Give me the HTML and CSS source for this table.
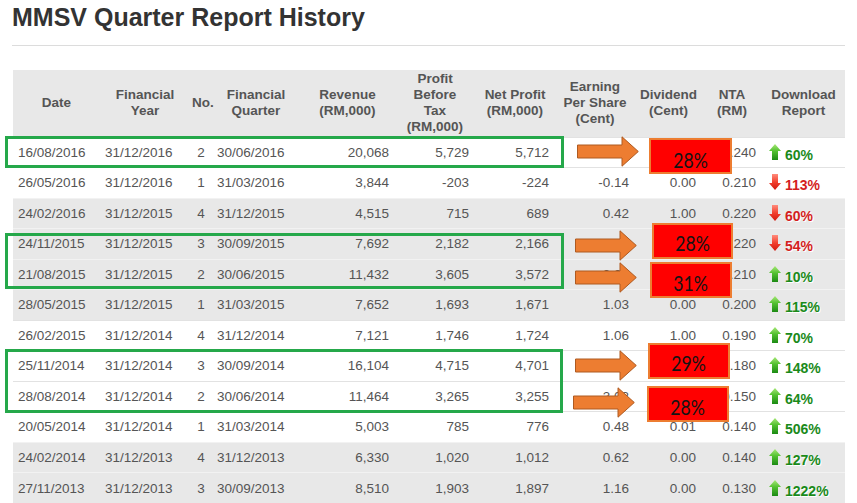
FILE: index.html
```html
<!DOCTYPE html>
<html>
<head>
<meta charset="utf-8">
<link rel="stylesheet" href="styles.css">
</head>
<body>
<div class="page">
  <h1 class="title">MMSV Quarter Report History</h1>
  <div class="rule"></div>
  <table class="report">
    <colgroup>
      <col class="c-date"><col class="c-fy"><col class="c-no"><col class="c-fq"><col class="c-rev"><col class="c-pbt"><col class="c-np"><col class="c-eps"><col class="c-div"><col class="c-nta"><col class="c-dl">
    </colgroup>
    <thead>
      <tr>
        <th>Date</th><th>Financial<br>Year</th><th>No.</th><th>Financial<br>Quarter</th><th>Revenue<br>(RM,000)</th><th>Profit<br>Before<br>Tax<br>(RM,000)</th><th>Net Profit<br>(RM,000)</th><th>Earning<br>Per Share<br>(Cent)</th><th>Dividend<br>(Cent)</th><th>NTA<br>(RM)</th><th>Download<br>Report</th>
      </tr>
    </thead>
    <tbody>
      <tr class="w"><td class="l">16/08/2016</td><td class="l">31/12/2016</td><td class="c">2</td><td class="l">30/06/2016</td><td>20,068</td><td>5,729</td><td>5,712</td><td>5.34</td><td>1.50</td><td>0.240</td><td class="dl"><span class="ico"><svg viewBox="0 0 12 16"><use href="#upArrow"/></svg></span><span class="pct g">60%</span></td></tr>
      <tr class="w"><td class="l">26/05/2016</td><td class="l">31/12/2016</td><td class="c">1</td><td class="l">31/03/2016</td><td>3,844</td><td>-203</td><td>-224</td><td>-0.14</td><td>0.00</td><td>0.210</td><td class="dl"><span class="ico"><svg viewBox="0 0 12 16"><use href="#downArrow"/></svg></span><span class="pct r">113%</span></td></tr>
      <tr class="g"><td class="l">24/02/2016</td><td class="l">31/12/2015</td><td class="c">4</td><td class="l">31/12/2015</td><td>4,515</td><td>715</td><td>689</td><td>0.42</td><td>1.00</td><td>0.220</td><td class="dl"><span class="ico"><svg viewBox="0 0 12 16"><use href="#downArrow"/></svg></span><span class="pct r">60%</span></td></tr>
      <tr class="g"><td class="l">24/11/2015</td><td class="l">31/12/2015</td><td class="c">3</td><td class="l">30/09/2015</td><td>7,692</td><td>2,182</td><td>2,166</td><td>2.04</td><td>0.60</td><td>0.220</td><td class="dl"><span class="ico"><svg viewBox="0 0 12 16"><use href="#downArrow"/></svg></span><span class="pct r">54%</span></td></tr>
      <tr class="g"><td class="l">21/08/2015</td><td class="l">31/12/2015</td><td class="c">2</td><td class="l">30/06/2015</td><td>11,432</td><td>3,605</td><td>3,572</td><td>3.37</td><td>1.00</td><td>0.210</td><td class="dl"><span class="ico"><svg viewBox="0 0 12 16"><use href="#upArrow"/></svg></span><span class="pct g">10%</span></td></tr>
      <tr class="g"><td class="l">28/05/2015</td><td class="l">31/12/2015</td><td class="c">1</td><td class="l">31/03/2015</td><td>7,652</td><td>1,693</td><td>1,671</td><td>1.03</td><td>0.00</td><td>0.200</td><td class="dl"><span class="ico"><svg viewBox="0 0 12 16"><use href="#upArrow"/></svg></span><span class="pct g">115%</span></td></tr>
      <tr class="w"><td class="l">26/02/2015</td><td class="l">31/12/2014</td><td class="c">4</td><td class="l">31/12/2014</td><td>7,121</td><td>1,746</td><td>1,724</td><td>1.06</td><td>1.00</td><td>0.190</td><td class="dl"><span class="ico"><svg viewBox="0 0 12 16"><use href="#upArrow"/></svg></span><span class="pct g">70%</span></td></tr>
      <tr class="w"><td class="l">25/11/2014</td><td class="l">31/12/2014</td><td class="c">3</td><td class="l">30/09/2014</td><td>16,104</td><td>4,715</td><td>4,701</td><td>4.40</td><td>1.30</td><td>0.180</td><td class="dl"><span class="ico"><svg viewBox="0 0 12 16"><use href="#upArrow"/></svg></span><span class="pct g">148%</span></td></tr>
      <tr class="w"><td class="l">28/08/2014</td><td class="l">31/12/2014</td><td class="c">2</td><td class="l">30/06/2014</td><td>11,464</td><td>3,265</td><td>3,255</td><td>3.03</td><td>0.90</td><td>0.150</td><td class="dl"><span class="ico"><svg viewBox="0 0 12 16"><use href="#upArrow"/></svg></span><span class="pct g">64%</span></td></tr>
      <tr class="w"><td class="l">20/05/2014</td><td class="l">31/12/2014</td><td class="c">1</td><td class="l">31/03/2014</td><td>5,003</td><td>785</td><td>776</td><td>0.48</td><td>0.01</td><td>0.140</td><td class="dl"><span class="ico"><svg viewBox="0 0 12 16"><use href="#upArrow"/></svg></span><span class="pct g">506%</span></td></tr>
      <tr class="g"><td class="l">24/02/2014</td><td class="l">31/12/2013</td><td class="c">4</td><td class="l">31/12/2013</td><td>6,330</td><td>1,020</td><td>1,012</td><td>0.62</td><td>0.00</td><td>0.140</td><td class="dl"><span class="ico"><svg viewBox="0 0 12 16"><use href="#upArrow"/></svg></span><span class="pct g">127%</span></td></tr>
      <tr class="g"><td class="l">27/11/2013</td><td class="l">31/12/2013</td><td class="c">3</td><td class="l">30/09/2013</td><td>8,510</td><td>1,903</td><td>1,897</td><td>1.16</td><td>0.00</td><td>0.130</td><td class="dl"><span class="ico"><svg viewBox="0 0 12 16"><use href="#upArrow"/></svg></span><span class="pct g">1222%</span></td></tr>
    </tbody>
  </table>

  <div class="gbox gb1"></div>
  <div class="gbox gb2"></div>
  <div class="gbox gb3"></div>

  <svg class="arrow a1" viewBox="0 0 62 31"><use href="#blockArrow"/></svg>
  <svg class="arrow a2" viewBox="0 0 62 31"><use href="#blockArrow"/></svg>
  <svg class="arrow a3" viewBox="0 0 62 31"><use href="#blockArrow"/></svg>
  <svg class="arrow a4" viewBox="0 0 62 31"><use href="#blockArrow"/></svg>
  <svg class="arrow a5" viewBox="0 0 62 31"><use href="#blockArrow"/></svg>

  <div class="rbox rb1"><span class="rtxt">28%</span></div>
  <div class="rbox rb2"><span class="rtxt">28%</span></div>
  <div class="rbox rb3"><span class="rtxt">31%</span></div>
  <div class="rbox rb4"><span class="rtxt">29%</span></div>
  <div class="rbox rb5"><span class="rtxt">28%</span></div>

  <svg class="defs" width="0" height="0">
    <defs>
      <linearGradient id="gUp" x1="0" y1="0" x2="0" y2="1">
        <stop offset="0" stop-color="#a8e878"/>
        <stop offset="0.45" stop-color="#52c030"/>
        <stop offset="1" stop-color="#1c8a14"/>
      </linearGradient>
      <linearGradient id="gDown" x1="0" y1="0" x2="0" y2="1">
        <stop offset="0" stop-color="#ff8c7c"/>
        <stop offset="0.5" stop-color="#f2402e"/>
        <stop offset="1" stop-color="#d0180e"/>
      </linearGradient>
      <polygon id="upArrow" points="6,0 12,7 9,7 9,16 3,16 3,7 0,7" fill="url(#gUp)"/>
      <polygon id="downArrow" points="6,16 12,9 9,9 9,0 3,0 3,9 0,9" fill="url(#gDown)"/>
      <polygon id="blockArrow" points="0.5,9 45,9 45,0.8 61.3,15.5 45,30.2 45,22 0.5,22" fill="#ed7d31" stroke="#ae5a21" stroke-width="1"/>
    </defs>
  </svg>
</div>
</body>
</html>
```
FILE: styles.css
```css
html, body {
  margin: 0;
  padding: 0;
  background: #ffffff;
}

.page {
  position: relative;
  width: 857px;
  height: 503px;
  overflow: hidden;
  display: flex;
  flex-direction: column;
  padding: 3px 12px 0 12px;
  box-sizing: border-box;
  font-family: "Liberation Sans", Arial, sans-serif;
}

.title {
  margin: 0;
  font-size: 25px;
  line-height: 28px;
  font-weight: bold;
  color: #333333;
}

.rule {
  margin-top: 14px;
  height: 1px;
  width: 833px;
  background: #dcdcdc;
}

.report {
  margin-top: 24px;
  margin-left: 1px;
  width: 832px;
  table-layout: fixed;
  border-collapse: collapse;
  border-spacing: 0;
  font-size: 13.5px;
  color: #555555;
}

.c-date { width: 87px; }
.c-fy { width: 90px; }
.c-no { width: 22px; }
.c-fq { width: 88px; }
.c-rev { width: 95px; }
.c-pbt { width: 80px; }
.c-np { width: 80px; }
.c-eps { width: 80px; }
.c-div { width: 67px; }
.c-nta { width: 60px; }
.c-dl { width: 83px; }

.report thead tr {
  height: 67px;
  background: #e8e8e8;
}

.report th {
  font-weight: bold;
  font-size: 13.5px;
  line-height: 16px;
  color: #555555;
  text-align: center;
  vertical-align: middle;
  padding: 0 2px;
}

.report tbody tr {
  height: 30.5px;
}

.report tbody tr.w {
  background: #ffffff;
}

.report tbody tr.g {
  background: #e8e8e8;
}

.report td {
  padding: 0 6px 0 4px;
  text-align: right;
  vertical-align: middle;
  white-space: nowrap;
  border-top: 1px solid #e2e2e2;
}

.report tr.g td {
  border-top-color: #f2f2f2;
}

.report td.l {
  text-align: left;
  padding-left: 5px;
}

.report td.c {
  text-align: center;
  padding: 0;
}

.report td.dl {
  text-align: left;
  padding-left: 7px;
  padding-right: 0;
}

.ico {
  display: inline-block;
  width: 12px;
  height: 16px;
  vertical-align: -2px;
  margin-right: 4px;
}

.ico svg {
  width: 12px;
  height: 16px;
  display: block;
}

.pct {
  font-weight: bold;
  font-size: 14px;
  position: relative;
  top: 2px;
  text-shadow: 1px 1px 0 #ffffff;
}

.pct.g { color: #1a8a1a; }
.pct.r { color: #d41e1e; }

.defs {
  position: absolute;
  width: 0;
  height: 0;
}

.gbox {
  position: absolute;
  border: 3px solid #25a84a;
  box-sizing: border-box;
}

.gb1 { left: 5px; top: 136px; width: 559px; height: 32px; }
.gb2 { left: 5px; top: 233px; width: 559px; height: 56px; }
.gb3 { left: 5px; top: 349px; width: 558px; height: 64px; }

.arrow {
  position: absolute;
  width: 62px;
  height: 31px;
}

.a1 { left: 577px; top: 136px; }
.a2 { left: 575px; top: 230px; }
.a3 { left: 575px; top: 262px; }
.a4 { left: 575px; top: 350px; }
.a5 { left: 573px; top: 387px; }

.rbox {
  position: absolute;
  box-sizing: border-box;
  background: #ff0000;
  border: 2px solid #ed7d31;
  display: flex;
  align-items: center;
  justify-content: center;
  padding-top: 6px;
  font-family: Lato, "Open Sans", sans-serif;
  font-size: 21px;
  color: #141414;
}

.rtxt {
  display: inline-block;
  transform: scaleX(0.84);
}

.rb1 { left: 649px; top: 138px; width: 83px; height: 36px; }
.rb2 { left: 652px; top: 223px; width: 81px; height: 36px; padding-top: 2px; }
.rb3 { left: 650px; top: 262px; width: 82px; height: 36px; padding-top: 4px; }
.rb4 { left: 648px; top: 343px; width: 82px; height: 36px; padding-top: 2px; }
.rb5 { left: 647px; top: 386px; width: 82px; height: 36px; padding-top: 4px; }
```
